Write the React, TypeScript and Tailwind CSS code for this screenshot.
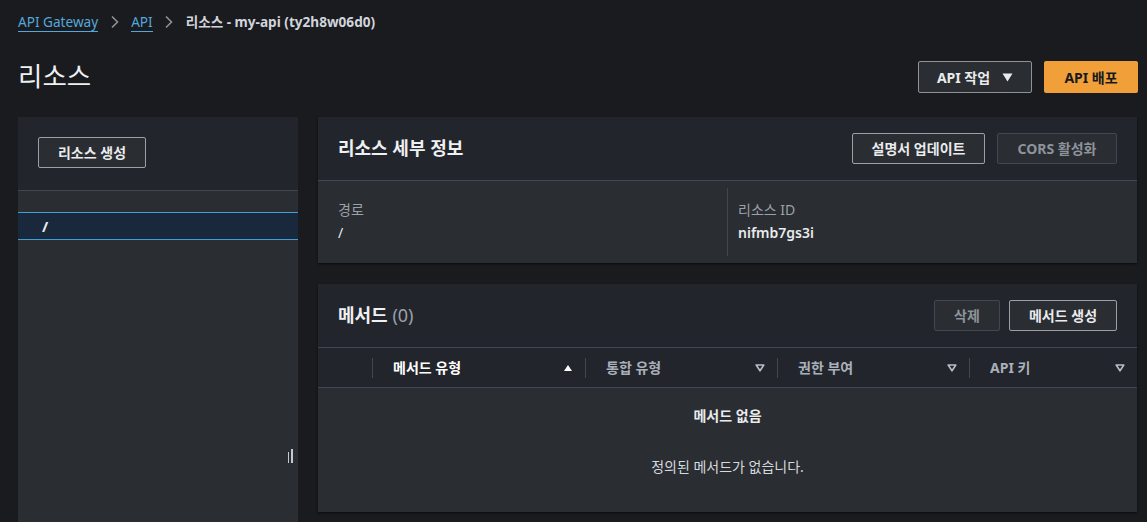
import { FC } from "react";

const font = { fontFamily: '"Noto Sans", "Noto Sans CJK KR", sans-serif' };

const Chevron: FC = () => (
  <svg width="10" height="14" viewBox="0 0 10 14" className="mx-[11.5px]">
    <path d="M2 1.5 L7.5 7 L2 12.5" fill="none" stroke="#8d9199" strokeWidth="1.6" />
  </svg>
);

const SortDown: FC = () => (
  <svg width="10" height="8" viewBox="0 0 10 8">
    <path d="M1.2 1 L8.8 1 L5 6.8 Z" fill="none" stroke="#b6bec9" strokeWidth="1.6" strokeLinejoin="round" />
  </svg>
);

const SortUp: FC = () => (
  <svg width="10" height="8" viewBox="0 0 10 8">
    <path d="M1 7 L9 7 L5 1 Z" fill="#ffffff" />
  </svg>
);

const OutlineButton: FC<{ label: string; disabled?: boolean; className?: string }> = ({ label, disabled, className }) => (
  <button
    className={
      "h-[31px] rounded-[2px] border text-[14px] font-bold " +
      (disabled
        ? "border-[#414750] bg-[#2a2d32] text-[#8d939b] "
        : "border-[#9aa0a6] bg-[#2a2d32] text-[#e9ebed] ") +
      (className ?? "")
    }
  >
    {label}
  </button>
);

const Column: FC<{ label: string; active?: boolean; className: string }> = ({ label, active, className }) => (
  <div className={"flex h-[39px] items-center " + className}>
    <div className="h-[20px] w-px bg-[#414750]" />
    <div className="flex flex-1 items-center justify-between pl-5 pr-[12px]">
      <span className={"text-[14px] font-bold " + (active ? "text-white" : "text-[#a9b0ba]")}>{label}</span>
      {active ? <SortUp /> : <SortDown />}
    </div>
  </div>
);

const App: FC = () => {
  return (
    <div style={font} className="flex h-[522px] w-[1147px] flex-col overflow-hidden bg-[#1a1b1f] text-[#e9ebed]">
      {/* breadcrumb */}
      <div className="flex h-[44px] items-center px-[18px] text-[13.6px]">
        <a className="border-b border-[#53a8db] leading-[18px] text-[#53a8db]">API Gateway</a>
        <Chevron />
        <a className="border-b border-[#53a8db] leading-[18px] text-[#53a8db]">API</a>
        <Chevron />
        <span className="font-bold text-[#d1d5db]">리소스 - my-api (ty2h8w06d0)</span>
      </div>

      {/* title row */}
      <div className="flex h-[73px] items-start justify-between px-[18px] pt-[17px]">
        <h1 className="text-[26.5px] leading-[30px] text-[#eef0f2]">리소스</h1>
        <div className="mr-[-9px] flex gap-[12px]">
          <button className="flex h-[32px] w-[114px] items-center justify-center gap-3 rounded-[2px] border border-[#8d9299] bg-[#2a2d32] text-[14px] font-bold text-[#e9ebed]">
            API 작업
            <svg width="11" height="9" viewBox="0 0 11 9">
              <path d="M0.5 0.5 L10.5 0.5 L5.5 8.5 Z" fill="#e9ebed" />
            </svg>
          </button>
          <button className="h-[32px] w-[94px] rounded-[2px] bg-[#f19f38] text-[14px] font-bold text-[#16191f]">API 배포</button>
        </div>
      </div>

      {/* main */}
      <div className="flex flex-1 gap-[20px] pl-[18px] pr-[10px]">
        {/* left tree */}
        <div className="relative flex w-[280px] flex-col bg-[#2a2d32]">
          <div className="h-[74px] border-b border-[#414750] bg-[#22252b] px-5 pt-5">
            <OutlineButton label="리소스 생성" className="w-[108px]" />
          </div>
          <div className="mt-[21px] flex h-[28px] items-center border-y border-[#3f9fd6] bg-[#19283a] pl-[24px]">
            <span className="text-[15px] font-bold text-[#e9ebed]">/</span>
          </div>
          <div className="absolute right-[5px] top-[335px] flex gap-[2px]">
            <div className="h-[11px] w-px bg-[#c6c9cd]" />
            <div className="mt-[-3px] h-[14px] w-[2px] bg-[#c6c9cd]" />
          </div>
        </div>

        {/* right */}
        <div className="flex flex-1 flex-col gap-[21px]">
          <div className="flex flex-col bg-[#2a2d32] shadow-[0_1px_2px_rgba(0,0,0,0.6)]">
            <div className="flex h-[64px] items-center justify-between border-b border-[#414750] bg-[#22252b] px-5">
              <h2 className="text-[18px] font-bold text-[#eef0f2]">리소스 세부 정보</h2>
              <div className="flex gap-3">
                <OutlineButton label="설명서 업데이트" className="w-[133px]" />
                <OutlineButton label="CORS 활성화" disabled className="w-[120px]" />
              </div>
            </div>
            <div className="flex h-[82px] items-center">
              <div className="flex h-full w-[409px] flex-col justify-center px-5">
                <span className="text-[14px] leading-[22px] text-[#9aa1a9]">경로</span>
                <span className="text-[14px] leading-[24px] text-[#e9ebed]">/</span>
              </div>
              <div className="h-[68px] w-px bg-[#414750]" />
              <div className="flex h-full flex-1 flex-col justify-center px-[10px]">
                <span className="text-[14px] leading-[22px] text-[#9aa1a9]">리소스 ID</span>
                <span className="text-[14px] font-semibold leading-[24px] text-[#e9ebed]">nifmb7gs3i</span>
              </div>
            </div>
          </div>

          <div className="flex h-[228px] flex-col bg-[#2a2d32] shadow-[0_1px_2px_rgba(0,0,0,0.6)]">
            <div className="flex h-[64px] items-center justify-between border-b border-[#414750] bg-[#22252b] px-5">
              <h2 className="text-[18px] font-bold text-[#eef0f2]">
                메서드 <span className="font-normal text-[#9aa1a9]">(0)</span>
              </h2>
              <div className="flex gap-[9px]">
                <OutlineButton label="삭제" disabled className="w-[66px]" />
                <OutlineButton label="메서드 생성" className="w-[108px]" />
              </div>
            </div>
            <div className="flex border-b border-[#414750] bg-[#22252b] pl-[54px]">
              <Column label="메서드 유형" active className="w-[213px]" />
              <Column label="통합 유형" className="w-[192px]" />
              <Column label="권한 부여" className="w-[192px]" />
              <Column label="API 키" className="flex-1" />
            </div>
            <div className="flex flex-col items-center pt-[17px]">
              <span className="text-[14px] font-bold text-[#e9ebed]">메서드 없음</span>
              <span className="mt-[30px] text-[14px] text-[#d6d9dd]">정의된 메서드가 없습니다.</span>
            </div>
          </div>
        </div>
      </div>
    </div>
  );
};

export default App;
